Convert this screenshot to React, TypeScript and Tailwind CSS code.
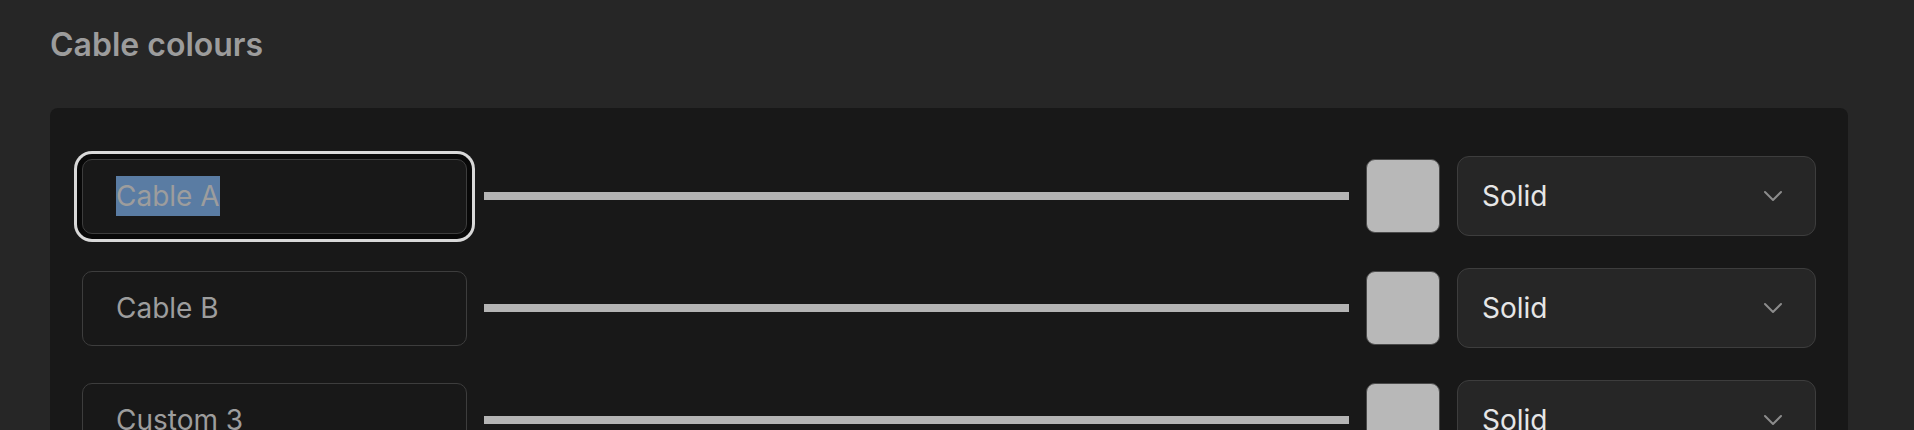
import React from "react";

type Row = { name: string; focused?: boolean };

const rows: Row[] = [
  { name: "Cable A", focused: true },
  { name: "Cable B" },
  { name: "Custom 3" },
  { name: "Custom 4" },
];

function Chevron() {
  return (
    <svg width="20" height="12" viewBox="0 0 20 12" fill="none" className="shrink-0">
      <path d="M2 2 L10 10 L18 2" stroke="#8c8c8c" strokeWidth="2" strokeLinecap="round" strokeLinejoin="round" />
    </svg>
  );
}

export default function App() {
  return (
    <div className="h-screen overflow-hidden bg-[#262626] pl-[50px] pr-[66px] pt-[25px] font-['Inter',sans-serif]">
      <h2 className="text-[32px] leading-[40px] font-semibold text-[#9c9c9c] mb-[43px]">Cable colours</h2>
      <div className="rounded-lg bg-[#181818] px-8 pt-12 pb-12 flex flex-col gap-8">
        {rows.map((r) => (
          <div key={r.name} className="flex items-center gap-[17px] h-20">
            <div
              className={
                r.focused
                  ? "w-[385px] h-[75px] shrink-0 rounded-[10px] border border-[#3d3d3d] bg-[#181818] pl-[33px] pr-8 flex items-center text-[28px] text-[#9d9d9d] shadow-[0_0_0_5px_#080808,0_0_0_8px_#d8d8d8]"
                  : "w-[385px] h-[75px] shrink-0 rounded-[10px] border border-[#3d3d3d] bg-[#181818] pl-[33px] pr-8 flex items-center text-[28px] text-[#9d9d9d]"
              }
            >
              {r.focused ? (
                <span className="bg-[#5a7ca3] leading-[40px] inline-block">{r.name}</span>
              ) : (
                <span className="leading-[40px]">{r.name}</span>
              )}
            </div>
            <div className="flex-1 h-2 bg-[#b4b4b4]" />
            <div className="w-[74px] h-[74px] shrink-0 rounded-[9px] border border-[#4a4a4a] bg-[#b8b8b8]" />
            <div className="w-[359px] h-20 shrink-0 rounded-xl border border-[#3d3d3d] bg-[#262626] pl-6 pr-8 flex items-center justify-between text-[28px] text-[#e6e6e6]">
              <span>Solid</span>
              <Chevron />
            </div>
          </div>
        ))}
      </div>
    </div>
  );
}
